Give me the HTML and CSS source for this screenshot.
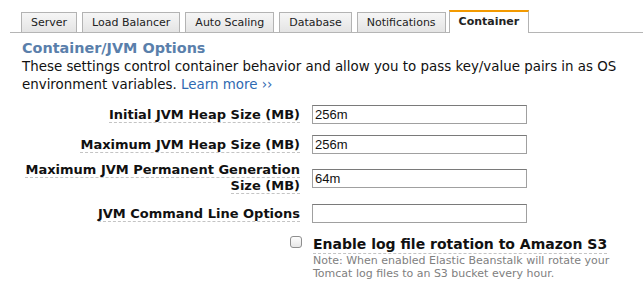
FILE: index.html
```html
<!DOCTYPE html>
<html lang="en">

<head>
    <meta charset="UTF-8">
    <title>Container</title>
    <link rel="stylesheet" href="styles.css">
</head>

<body>
    <div class="page-wrapper">
        <ul class="tabs">
            <li class="tab">Server</li>
            <li class="tab">Load Balancer</li>
            <li class="tab">Auto Scaling</li>
            <li class="tab">Database</li>
            <li class="tab">Notifications</li>
            <li class="tab active">Container</li>
        </ul>

        <div class="panel">
            <h2 class="panel-title">Container/JVM Options</h2>
            <p class="intro">These settings control container behavior and allow you to pass key/value pairs in as OS environment variables. <a href="#">Learn more &rsaquo;&rsaquo;</a></p>

            <div class="form-row">
                <label class="field-label"><span>Initial JVM Heap Size (MB)</span></label>
                <input class="field-input" type="text" value="256m">
            </div>
            <div class="form-row">
                <label class="field-label"><span>Maximum JVM Heap Size (MB)</span></label>
                <input class="field-input" type="text" value="256m">
            </div>
            <div class="form-row tall">
                <label class="field-label"><span>Maximum JVM Permanent Generation Size (MB)</span></label>
                <input class="field-input" type="text" value="64m">
            </div>
            <div class="form-row">
                <label class="field-label"><span>JVM Command Line Options</span></label>
                <input class="field-input" type="text" value="">
            </div>

            <div class="check-row">
                <span class="check-box"></span>
                <div class="check-text">
                    <div class="check-label">Enable log file rotation to Amazon S3</div>
                    <div class="check-note">Note: When enabled Elastic Beanstalk will rotate your Tomcat log files to an S3 bucket every hour.</div>
                </div>
            </div>
        </div>
    </div>
</body>

</html>
```

FILE: styles.css
```css
body,
html {
    margin: 0;
    padding: 0;
    font-family: 'DejaVu Sans', Verdana, sans-serif;
    background-color: white;
    color: #111;
}

.page-wrapper {
    padding: 10px 0 0 10px;
}

.tabs {
    display: flex;
    list-style: none;
    margin: 0;
    padding: 0 0 0 11px;
    border-bottom: 1px solid #b5b5b5;
    gap: 5px;
    align-items: flex-end;
}

.tab {
    font-size: 11px;
    line-height: 19px;
    padding: 0 9px;
    background: linear-gradient(#f6f6f6, #e4e4e4);
    border: 1px solid #b3b3b3;
    border-bottom: none;
    color: #222;
    white-space: nowrap;
}

.tab.active {
    background: white;
    border-top: 2px solid #f39a00;
    font-weight: bold;
    line-height: 20px;
    padding: 0 9px 1px;
    margin-bottom: -1px;
    margin-left: -2px;
}

.panel {
    padding: 0 0 0 12px;
}

.panel-title {
    margin: 6px 0 0;
    font-size: 14.4px;
    line-height: 19px;
    color: #5a7fab;
}

.intro {
    margin: 0;
    font-size: 13.4px;
    line-height: 18px;
    width: 610px;
}

.intro a {
    color: #2f69b1;
    text-decoration: none;
}

.form-row {
    display: flex;
    align-items: center;
    margin-top: 11px;
}

.form-row.tall {
    margin-top: 8px;
}

.form-row.tall + .form-row {
    margin-top: 10px;
}

.field-label {
    width: 278px;
    text-align: right;
    font-size: 13px;
    font-weight: bold;
    line-height: 16px;
    padding-right: 12px;
}

.field-label span {
    border-bottom: 1px dashed #c4c4c4;
}

.field-input {
    width: 209px;
    height: 15px;
    margin: 0;
    padding: 1px 2px;
    border: 1px solid #a0a0a0;
    border-top-color: #7a7a7a;
    font-family: 'Liberation Sans', Arial, sans-serif;
    font-size: 13px;
    color: #111;
}

.check-row {
    display: flex;
    margin: 11px 0 0 268px;
}

.check-box {
    width: 10px;
    height: 10px;
    border: 1px solid #8e8e8e;
    border-radius: 3px;
    background: linear-gradient(#fdfdfd, #e6e6e6);
    margin: 2px 11px 0 0;
    flex: none;
}

.check-label {
    display: inline-block;
    font-size: 14px;
    font-weight: bold;
    line-height: 17px;
    border-bottom: 1px dashed #c4c4c4;
}

.check-note {
    font-size: 11px;
    line-height: 13px;
    color: #808080;
    width: 320px;
}
```
